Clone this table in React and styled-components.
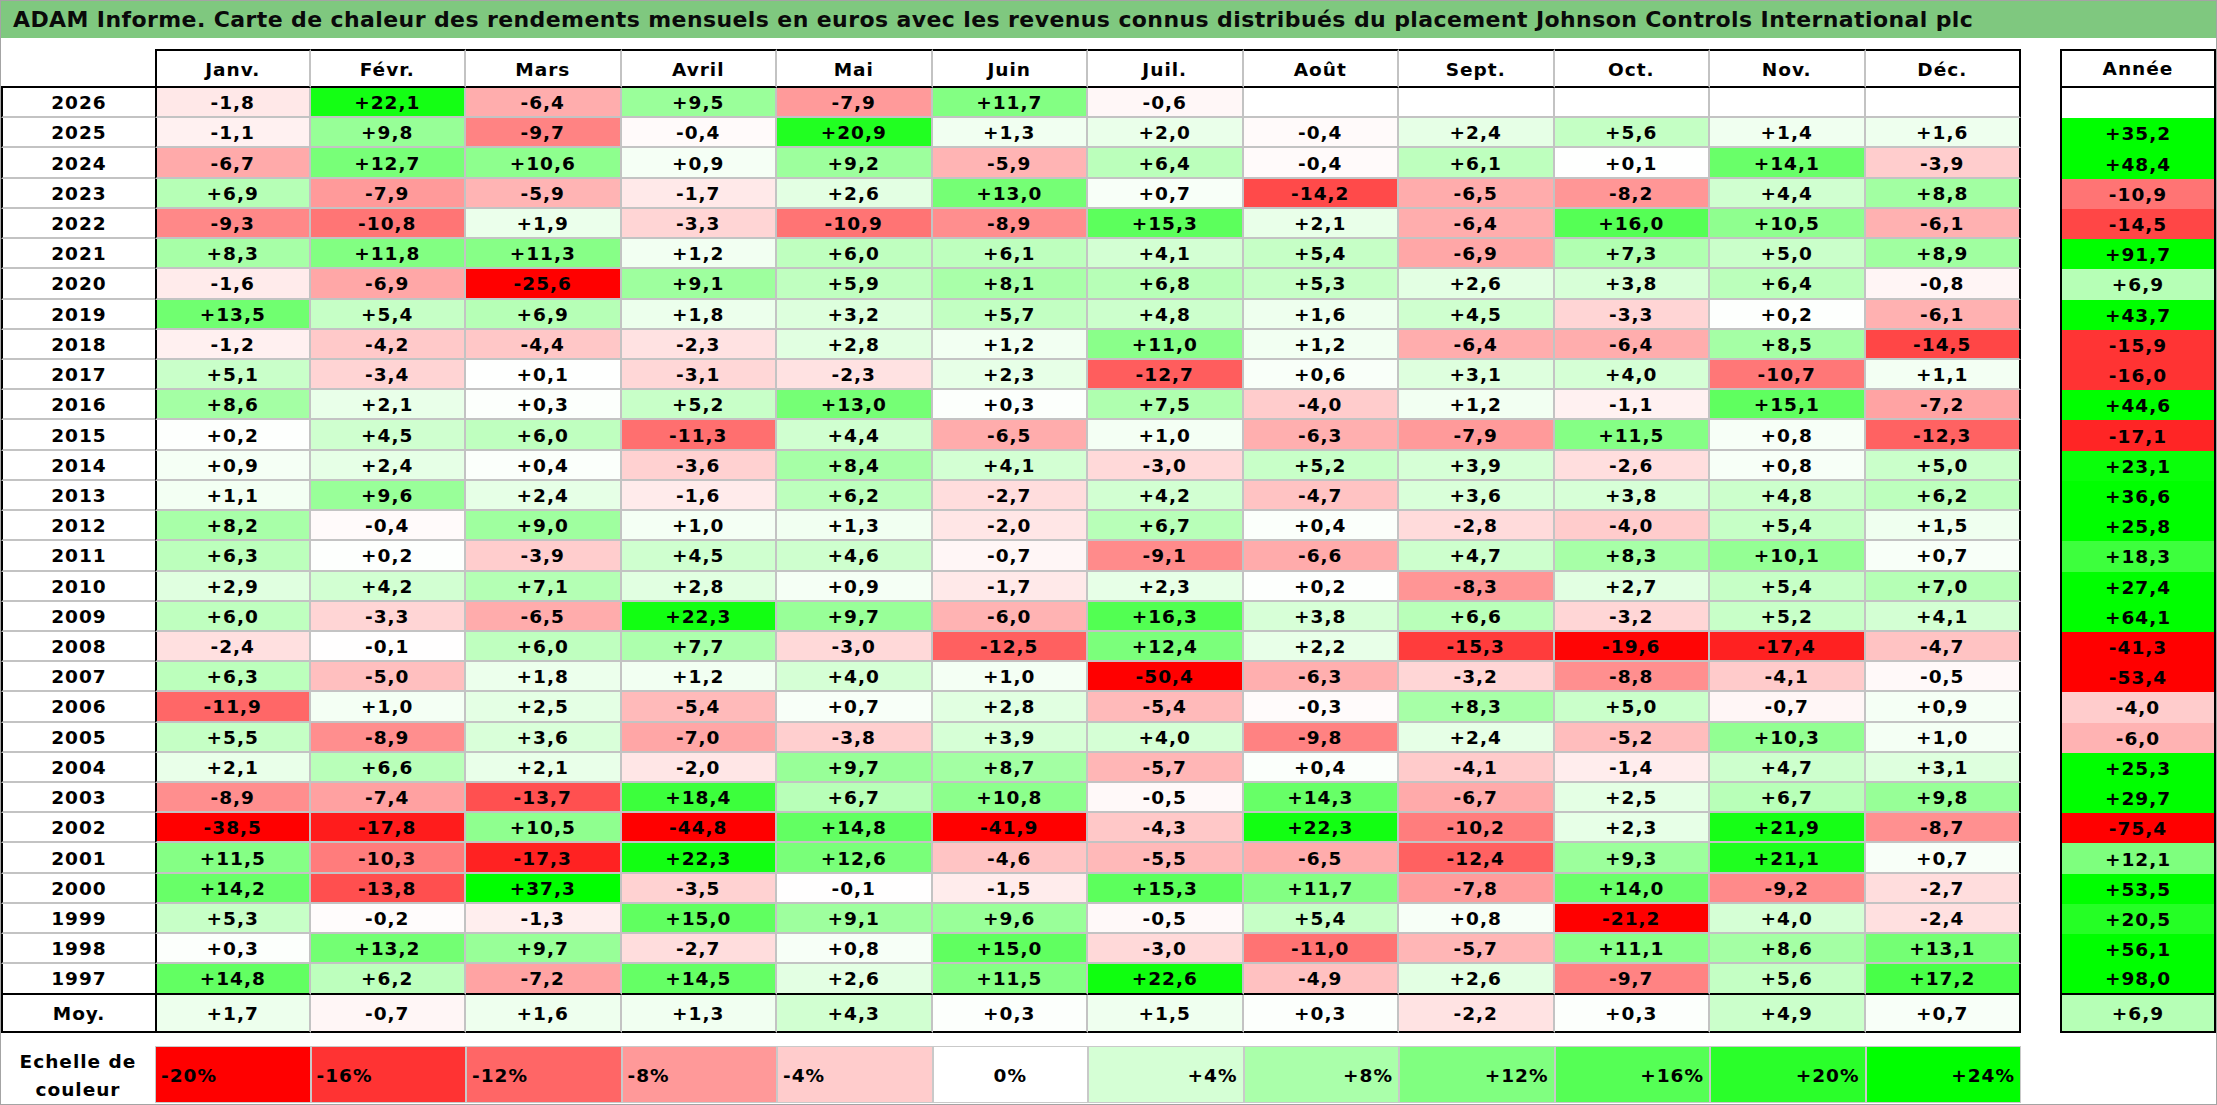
import React from 'react';
import styled, { createGlobalStyle, css } from 'styled-components';

const Global = createGlobalStyle`
  html, body { margin: 0; padding: 0; background: #ffffff; }
  body { font-family: "DejaVu Sans", Verdana, sans-serif; }
`;

const MONTHS = ['Janv.', 'Févr.', 'Mars', 'Avril', 'Mai', 'Juin', 'Juil.', 'Août', 'Sept.', 'Oct.', 'Nov.', 'Déc.'];

const RAW = `
2026|-1,8|+22,1|-6,4|+9,5|-7,9|+11,7|-0,6||||||
2025|-1,1|+9,8|-9,7|-0,4|+20,9|+1,3|+2,0|-0,4|+2,4|+5,6|+1,4|+1,6|+35,2
2024|-6,7|+12,7|+10,6|+0,9|+9,2|-5,9|+6,4|-0,4|+6,1|+0,1|+14,1|-3,9|+48,4
2023|+6,9|-7,9|-5,9|-1,7|+2,6|+13,0|+0,7|-14,2|-6,5|-8,2|+4,4|+8,8|-10,9
2022|-9,3|-10,8|+1,9|-3,3|-10,9|-8,9|+15,3|+2,1|-6,4|+16,0|+10,5|-6,1|-14,5
2021|+8,3|+11,8|+11,3|+1,2|+6,0|+6,1|+4,1|+5,4|-6,9|+7,3|+5,0|+8,9|+91,7
2020|-1,6|-6,9|-25,6|+9,1|+5,9|+8,1|+6,8|+5,3|+2,6|+3,8|+6,4|-0,8|+6,9
2019|+13,5|+5,4|+6,9|+1,8|+3,2|+5,7|+4,8|+1,6|+4,5|-3,3|+0,2|-6,1|+43,7
2018|-1,2|-4,2|-4,4|-2,3|+2,8|+1,2|+11,0|+1,2|-6,4|-6,4|+8,5|-14,5|-15,9
2017|+5,1|-3,4|+0,1|-3,1|-2,3|+2,3|-12,7|+0,6|+3,1|+4,0|-10,7|+1,1|-16,0
2016|+8,6|+2,1|+0,3|+5,2|+13,0|+0,3|+7,5|-4,0|+1,2|-1,1|+15,1|-7,2|+44,6
2015|+0,2|+4,5|+6,0|-11,3|+4,4|-6,5|+1,0|-6,3|-7,9|+11,5|+0,8|-12,3|-17,1
2014|+0,9|+2,4|+0,4|-3,6|+8,4|+4,1|-3,0|+5,2|+3,9|-2,6|+0,8|+5,0|+23,1
2013|+1,1|+9,6|+2,4|-1,6|+6,2|-2,7|+4,2|-4,7|+3,6|+3,8|+4,8|+6,2|+36,6
2012|+8,2|-0,4|+9,0|+1,0|+1,3|-2,0|+6,7|+0,4|-2,8|-4,0|+5,4|+1,5|+25,8
2011|+6,3|+0,2|-3,9|+4,5|+4,6|-0,7|-9,1|-6,6|+4,7|+8,3|+10,1|+0,7|+18,3
2010|+2,9|+4,2|+7,1|+2,8|+0,9|-1,7|+2,3|+0,2|-8,3|+2,7|+5,4|+7,0|+27,4
2009|+6,0|-3,3|-6,5|+22,3|+9,7|-6,0|+16,3|+3,8|+6,6|-3,2|+5,2|+4,1|+64,1
2008|-2,4|-0,1|+6,0|+7,7|-3,0|-12,5|+12,4|+2,2|-15,3|-19,6|-17,4|-4,7|-41,3
2007|+6,3|-5,0|+1,8|+1,2|+4,0|+1,0|-50,4|-6,3|-3,2|-8,8|-4,1|-0,5|-53,4
2006|-11,9|+1,0|+2,5|-5,4|+0,7|+2,8|-5,4|-0,3|+8,3|+5,0|-0,7|+0,9|-4,0
2005|+5,5|-8,9|+3,6|-7,0|-3,8|+3,9|+4,0|-9,8|+2,4|-5,2|+10,3|+1,0|-6,0
2004|+2,1|+6,6|+2,1|-2,0|+9,7|+8,7|-5,7|+0,4|-4,1|-1,4|+4,7|+3,1|+25,3
2003|-8,9|-7,4|-13,7|+18,4|+6,7|+10,8|-0,5|+14,3|-6,7|+2,5|+6,7|+9,8|+29,7
2002|-38,5|-17,8|+10,5|-44,8|+14,8|-41,9|-4,3|+22,3|-10,2|+2,3|+21,9|-8,7|-75,4
2001|+11,5|-10,3|-17,3|+22,3|+12,6|-4,6|-5,5|-6,5|-12,4|+9,3|+21,1|+0,7|+12,1
2000|+14,2|-13,8|+37,3|-3,5|-0,1|-1,5|+15,3|+11,7|-7,8|+14,0|-9,2|-2,7|+53,5
1999|+5,3|-0,2|-1,3|+15,0|+9,1|+9,6|-0,5|+5,4|+0,8|-21,2|+4,0|-2,4|+20,5
1998|+0,3|+13,2|+9,7|-2,7|+0,8|+15,0|-3,0|-11,0|-5,7|+11,1|+8,6|+13,1|+56,1
1997|+14,8|+6,2|-7,2|+14,5|+2,6|+11,5|+22,6|-4,9|+2,6|-9,7|+5,6|+17,2|+98,0
Moy.|+1,7|-0,7|+1,6|+1,3|+4,3|+0,3|+1,5|+0,3|-2,2|+0,3|+4,9|+0,7|+6,9
`;

const ROWS = RAW.trim().split('\n').map((line) => {
  const parts = line.split('|');
  return { label: parts[0], months: parts.slice(1, 13), year: parts[13] || '' };
});

const SCALE = [-20, -16, -12, -8, -4, 0, 4, 8, 12, 16, 20, 24];

const toNum = (s) => parseFloat(String(s).replace(',', '.'));

const heat = (s) => {
  if (s === '' || s == null) return '#ffffff';
  const v = typeof s === 'number' ? s : toNum(s);
  if (v < 0) {
    const t = Math.min(1, -v / 20);
    const c = Math.round(255 * (1 - t));
    return `rgb(255, ${c}, ${c})`;
  }
  const t = Math.min(1, v / 24);
  const c = Math.round(255 * (1 - t));
  return `rgb(${c}, 255, ${c})`;
};

const LINES = {
  k: '2px solid #000000',
  g: '2px solid #c3c3c3',
};

const edges = ({ $t, $r, $b, $l }) => css`
  border-top: ${LINES[$t] || 'none'};
  border-right: ${LINES[$r] || 'none'};
  border-bottom: ${LINES[$b] || 'none'};
  border-left: ${LINES[$l] || 'none'};
`;

const Frame = styled.div`
  width: 2217px;
  height: 1105px;
  box-sizing: border-box;
  border: 1px solid #a4a4a4;
  background: #ffffff;
  display: flex;
  flex-direction: column;
  overflow: hidden;
`;

const TitleBar = styled.div`
  flex: 0 0 37px;
  display: flex;
  align-items: center;
  padding-left: 12px;
  background: #7fc87f;
  color: #0a0a0a;
  font-family: "DejaVu Sans", Verdana, sans-serif;
  font-weight: 700;
  font-size: 22px;
  letter-spacing: 0.4px;
  white-space: nowrap;
`;

const Sheet = styled.div`
  margin-top: 11px;
  display: grid;
  grid-template-columns: 154px repeat(12, 155.5px) 39px 156px;
  grid-template-rows: 39px repeat(30, 30.233px) 38px 13.5px 57px;
  font-family: "DejaVu Sans", Verdana, sans-serif;
  font-weight: 700;
  font-size: 18.5px;
  letter-spacing: 1px;
  color: #000000;
`;

const Cell = styled.div`
  box-sizing: border-box;
  display: flex;
  align-items: center;
  justify-content: center;
  white-space: nowrap;
  background: #ffffff;
  ${edges}
`;

const Corner = styled(Cell)``;

const MonthHead = styled(Cell)`
  padding-top: 1px;
`;

const YearHead = styled(Cell)``;

const Gap = styled.div``;

const RowLabel = styled(Cell)`
  padding-top: 1px;
`;

const HeatCell = styled(Cell)`
  padding-top: 1px;
`;

const YearCell = styled(Cell)`
  padding-top: 1px;
`;

const Spacer = styled.div`
  grid-column: 1 / -1;
`;

const ScaleLabel = styled.div`
  display: flex;
  align-items: center;
  justify-content: center;
  text-align: center;
  line-height: 28px;
  padding-top: 2px;
`;

const ScaleCell = styled(Cell)`
  border: 1px solid #c9c9c9;
  justify-content: ${({ $align }) => $align};
  padding: 2px 5px 0 5px;
`;

export default function App() {
  const last = ROWS.length - 1;
  return (
    <>
      <Global />
      <Frame>
        <TitleBar>
          ADAM Informe. Carte de chaleur des rendements mensuels en euros avec les revenus connus distribués du placement Johnson Controls International plc
        </TitleBar>
        <Sheet>
          <Corner $b="k" />
          {MONTHS.map((m, i) => (
            <MonthHead key={m} $t="k" $b="k" $l={i === 0 ? 'k' : undefined} $r={i === 11 ? 'k' : 'g'}>
              {m}
            </MonthHead>
          ))}
          <Gap />
          <YearHead $t="k" $r="k" $b="k" $l="k">Année</YearHead>

          {ROWS.map((row, ri) => {
            const closing = ri >= last - 1;
            const bottom = closing ? 'k' : 'g';
            return (
              <React.Fragment key={row.label}>
                <RowLabel $l="k" $b={bottom}>{row.label}</RowLabel>
                {row.months.map((v, mi) => (
                  <HeatCell
                    key={mi}
                    $l={mi === 0 ? 'k' : undefined}
                    $r={mi === 11 ? 'k' : 'g'}
                    $b={bottom}
                    style={{ background: heat(v) }}
                  >
                    {v}
                  </HeatCell>
                ))}
                <Gap />
                <YearCell
                  $l="k"
                  $r="k"
                  $b={closing ? 'k' : undefined}
                  style={{ background: heat(row.year) }}
                >
                  {row.year}
                </YearCell>
              </React.Fragment>
            );
          })}

          <Spacer />
          <ScaleLabel>
            Echelle de
            <br />
            couleur
          </ScaleLabel>
          {SCALE.map((s) => (
            <ScaleCell
              key={s}
              $align={s < 0 ? 'flex-start' : s > 0 ? 'flex-end' : 'center'}
              style={{ background: heat(s) }}
            >
              {s > 0 ? `+${s}%` : `${s}%`}
            </ScaleCell>
          ))}
        </Sheet>
      </Frame>
    </>
  );
}
